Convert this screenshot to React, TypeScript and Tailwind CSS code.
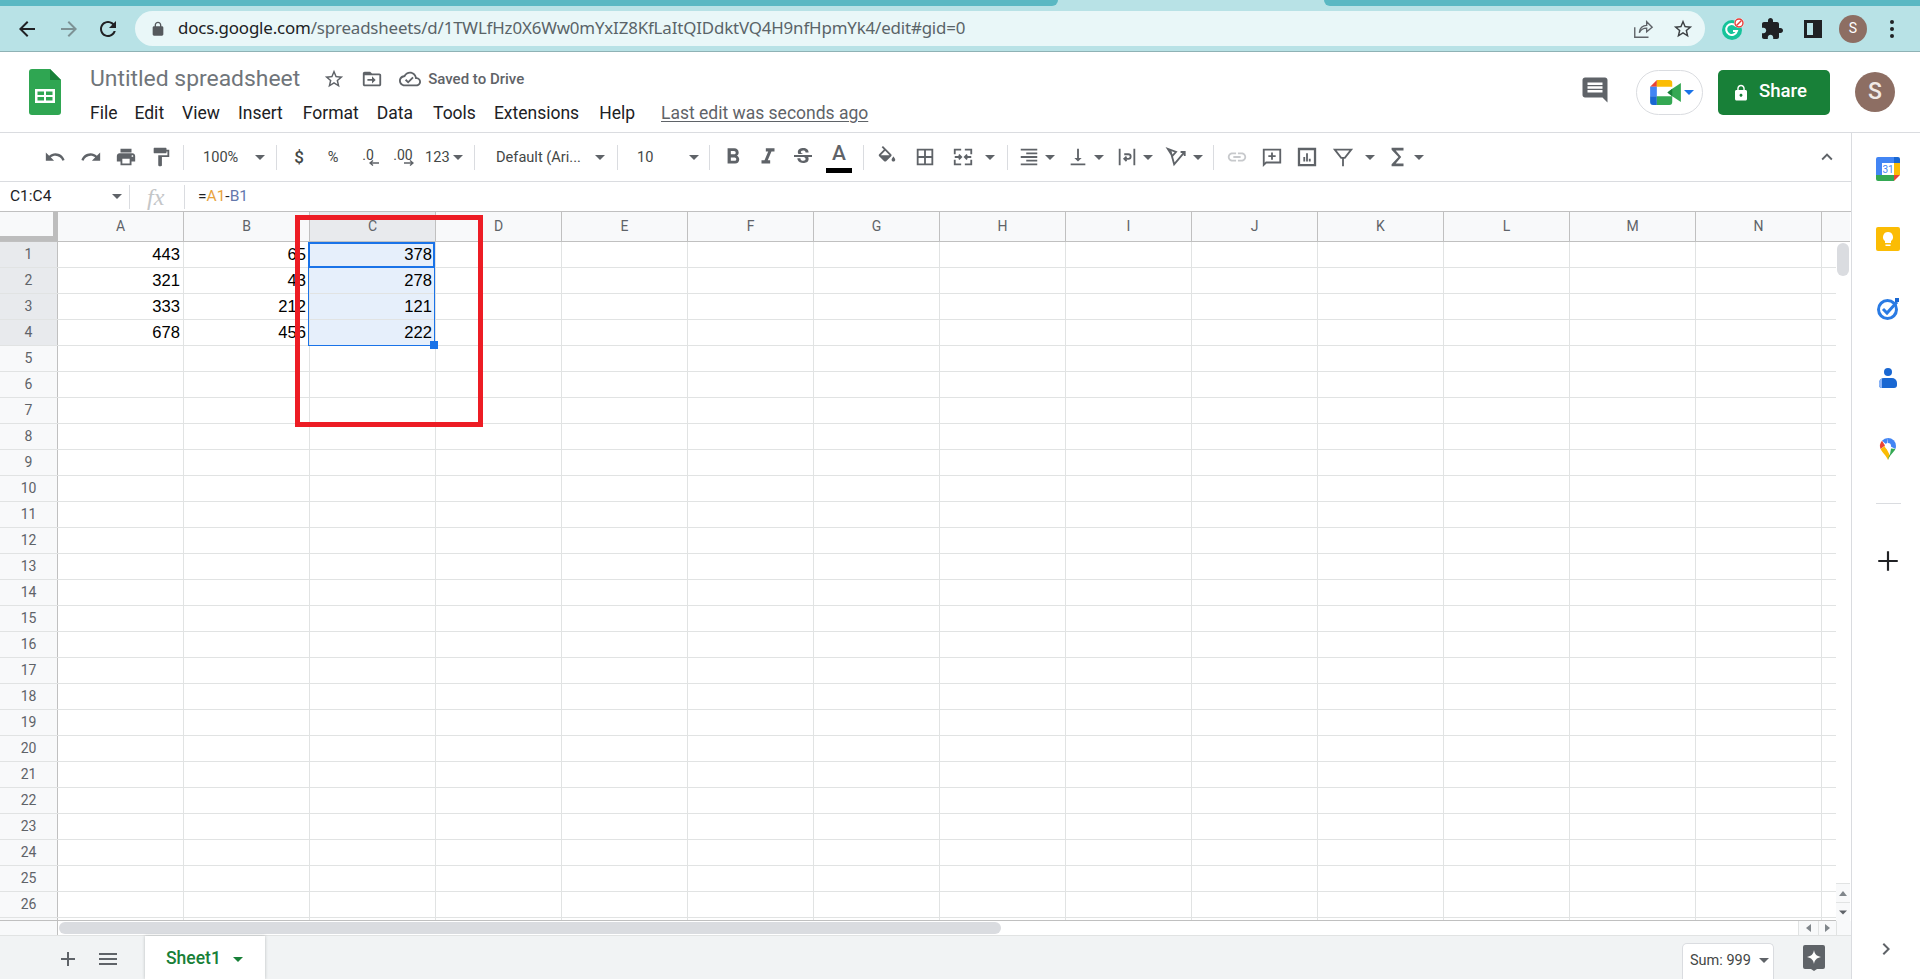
import React from "react";

const P = ({ d, c = "#5f6368", s = 22, className = "" }: { d: string; c?: string; s?: number; className?: string }) => (
  <svg viewBox="0 0 24 24" width={s} height={s} className={"shrink-0 " + className} fill={c}>
    <path d={d} />
  </svg>
);
const Caret = ({ className = "", c = "#5f6368" }: { className?: string; c?: string }) => (
  <svg viewBox="0 0 10 5" width={10} height={5} className={"shrink-0 " + className} fill={c}>
    <path d="M0 0h10L5 5z" />
  </svg>
);
const Sep = ({ className = "" }: { className?: string }) => <div className={"w-px h-[25px] bg-[#dadce0] shrink-0 " + className} />;

const COLS = ["A", "B", "C", "D", "E", "F", "G", "H", "I", "J", "K", "L", "M", "N"];
const DATA: Record<number, string[]> = {
  1: ["443", "65", "378"],
  2: ["321", "43", "278"],
  3: ["333", "212", "121"],
  4: ["678", "456", "222"],
};
const ROWS = Array.from({ length: 26 }, (_, i) => i + 1);

function BrowserBar() {
  return (
    <div className="h-[52px] bg-[#b8e2e6] border-b border-[#8fb2b5] flex flex-col shrink-0">
      <div className="h-[6px] flex shrink-0">
        <div className="w-[1058px] bg-[#5ab8c3] rounded-br-[8px]" />
        <div className="w-[266px]" />
        <div className="flex-1 bg-[#5ab8c3] rounded-bl-[8px]" />
      </div>
      <div className="flex items-center h-[35px] mt-[5px]">
        <P s={24} className="ml-[15px]" c="#202124" d="M20 11H7.83l5.59-5.59L12 4l-8 8 8 8 1.41-1.41L7.83 13H20v-2z" />
        <P s={24} className="ml-[18px]" c="#7d9295" d="M12 4l-1.41 1.41L16.17 11H4v2h12.17l-5.58 5.59L12 20l8-8z" />
        <P s={24} className="ml-[15px]" c="#202124" d="M17.65 6.35C16.2 4.9 14.21 4 12 4c-4.42 0-7.99 3.58-7.99 8s3.57 8 7.99 8c3.73 0 6.84-2.55 7.73-6h-2.08c-.82 2.33-3.04 4-5.65 4-3.31 0-6-2.69-6-6s2.69-6 6-6c1.66 0 3.14.69 4.22 1.78L13 11h7V4l-2.35 2.35z" />
        <div className="ml-[15px] w-[1570px] h-[35px] bg-[#e9f7f8] rounded-full flex items-center relative">
          <P s={16} className="ml-[15px]" c="#55595d" d="M18 8h-1V6c0-2.76-2.24-5-5-5S7 3.24 7 6v2H6c-1.1 0-2 .9-2 2v10c0 1.1.9 2 2 2h12c1.1 0 2-.9 2-2V10c0-1.1-.9-2-2-2zM9 8V6c0-1.66 1.34-3 3-3s3 1.34 3 3v2H9z" />
          <div className="ml-[12px] text-[16.9px] leading-none whitespace-nowrap font-['Noto_Sans',sans-serif] text-[#5a6468] tracking-[-0.16px]">
            <span className="text-[#202124]">docs.google.com</span>/spreadsheets/d/1TWLfHz0X6Ww0mYxIZ8KfLaItQIDdktVQ4H9nfHpmYk4/edit#gid=0
          </div>
          <div className="ml-auto flex items-center pr-[11px]">
            <svg viewBox="0 0 24 24" width={22} height={22} fill="none" stroke="#5f6368" strokeWidth="1.5">
              <path d="M3 10v11h15M8 16c0-5 4-8 8-8V4l6 6-6 5v-4c-3 0-6 1-8 5z" />
            </svg>
            <P s={22} className="ml-[18px]" c="#3c4043" d="M22 9.24l-7.19-.62L12 2 9.19 8.63 2 9.24l5.46 4.73L5.82 21 12 17.27 18.18 21l-1.63-7.03L22 9.24zM12 15.4l-3.76 2.27 1-4.28-3.32-2.88 4.38-.38L12 6.1l1.71 4.04 4.38.38-3.32 2.88 1 4.28L12 15.4z" />
          </div>
        </div>
        <svg viewBox="0 0 24 24" width={24} height={24} className="ml-[16px] shrink-0">
          <circle cx="11" cy="13" r="10" fill="#15c39a" />
          <path d="M15 9a5.5 5.5 0 1 0 1 5h-4" fill="none" stroke="#fff" strokeWidth="2" />
          <circle cx="18" cy="6" r="5" fill="#fff" />
          <circle cx="18" cy="6" r="4" fill="none" stroke="#e53935" strokeWidth="1.4" />
          <path d="M15.5 8.5l5-5" stroke="#e53935" strokeWidth="1.4" />
        </svg>
        <P s={24} className="ml-[15px]" c="#202124" d="M20.5 11H19V7c0-1.1-.9-2-2-2h-4V3.5C13 2.12 11.88 1 10.5 1S8 2.12 8 3.5V5H4c-1.1 0-1.99.9-1.99 2v3.8H3.5c1.49 0 2.7 1.21 2.7 2.7s-1.21 2.7-2.7 2.7H2V20c0 1.1.9 2 2 2h3.8v-1.5c0-1.49 1.21-2.7 2.7-2.7 1.49 0 2.7 1.21 2.7 2.7V22H17c1.1 0 2-.9 2-2v-4h1.5c1.38 0 2.5-1.12 2.5-2.5S21.88 11 20.5 11z" />
        <div className="ml-[20px] w-[18px] h-[18px] border-[3px] border-[#202124] flex justify-end shrink-0">
          <div className="w-[6px] h-full bg-[#202124]" />
        </div>
        <div className="ml-[17px] w-[28px] h-[28px] rounded-full bg-[#8d6e63] text-white text-[14px] flex items-center justify-center font-['Roboto',sans-serif] shrink-0">S</div>
        <svg viewBox="0 0 4 18" width={4} height={18} className="ml-[23px] shrink-0" fill="#202124">
          <circle cx="2" cy="2" r="2" /><circle cx="2" cy="9" r="2" /><circle cx="2" cy="16" r="2" />
        </svg>
      </div>
    </div>
  );
}

function SheetHeader() {
  const menus = [
    ["File", "ml-0"], ["Edit", "ml-[17px]"], ["View", "ml-[18px]"], ["Insert", "ml-[18px]"], ["Format", "ml-[20px]"],
    ["Data", "ml-[18px]"], ["Tools", "ml-[20px]"], ["Extensions", "ml-[18px]"], ["Help", "ml-[20px]"],
  ];
  return (
    <div className="h-[81px] border-b border-[#dadce0] flex shrink-0 bg-white font-['Roboto',sans-serif]">
      <svg viewBox="0 0 32 46" width={32} height={46} className="ml-[29px] mt-[17px] shrink-0">
        <path d="M3 0h18l11 11v32a3 3 0 0 1-3 3H3a3 3 0 0 1-3-3V3a3 3 0 0 1 3-3z" fill="#2fa652" />
        <path d="M21 0l11 11H21z" fill="#188038" />
        <path d="M6 20h20v14H6z" fill="#fff" />
        <path d="M8.5 22.5h6.5v3.5H8.5zM17 22.5h6.5v3.5H17zM8.5 28h6.5v3.5H8.5zM17 28h6.5v3.5H17z" fill="#2fa652" />
      </svg>
      <div className="ml-[29px] flex flex-col">
        <div className="flex items-center h-[30px] mt-[12px]">
          <span className="text-[22.9px] leading-none text-[#70757a] whitespace-nowrap">Untitled spreadsheet</span>
          <P s={22} className="ml-[23px]" c="#5f6368" d="M22 9.24l-7.19-.62L12 2 9.19 8.63 2 9.24l5.46 4.73L5.82 21 12 17.27 18.18 21l-1.63-7.03L22 9.24zM12 15.4l-3.76 2.27 1-4.28-3.32-2.88 4.38-.38L12 6.1l1.71 4.04 4.38.38-3.32 2.88 1 4.28L12 15.4z" />
          <P s={22} className="ml-[16px]" c="#5f6368" d="M20 6h-8l-2-2H4c-1.1 0-2 .9-2 2v12c0 1.1.9 2 2 2h16c1.1 0 2-.9 2-2V8c0-1.1-.9-2-2-2zm0 12H4V8h16v10zm-8-1l4-4-4-4v3H7v2h5v3z" />
          <P s={22} className="ml-[16px]" c="#5f6368" d="M19.35 10.04C18.67 6.59 15.64 4 12 4 9.11 4 6.6 5.64 5.35 8.04 2.34 8.36 0 10.91 0 14c0 3.31 2.69 6 6 6h13c2.76 0 5-2.24 5-5 0-2.64-2.05-4.78-4.65-4.96zM19 18H6c-2.21 0-4-1.79-4-4 0-2.05 1.53-3.76 3.56-3.97l1.07-.11.5-.95C8.08 7.14 9.94 6 12 6c2.62 0 4.88 1.86 5.39 4.43l.3 1.5 1.53.11c1.56.1 2.78 1.41 2.78 2.96 0 1.65-1.35 3-3 3zm-9-3.82l-2.09-2.09L6.5 13.5 10 17l6.01-6.01-1.41-1.41z" />
          <span className="ml-[7px] text-[15px] font-medium text-[#5f6368] whitespace-nowrap">Saved to Drive</span>
        </div>
        <div className="flex items-center h-[28px] mt-[6px] text-[17.5px] text-[#202124] leading-none whitespace-nowrap">
          {menus.map(([m, c]) => (
            <span key={m} className={c}>{m}</span>
          ))}
          <span className="ml-[26px] text-[#5f6368] underline underline-offset-2">Last edit was seconds ago</span>
        </div>
      </div>
      <div className="ml-auto flex items-start">
        <P s={30} className="mt-[23px]" c="#5f6368" d="M21.99 4c0-1.1-.89-2-1.99-2H4c-1.1 0-2 .9-2 2v12c0 1.1.9 2 2 2h14l4 4-.01-18zM18 14H6v-2h12v2zm0-3H6V9h12v2zm0-3H6V6h12v2z" />
        <div className="ml-[26px] mt-[18px] w-[67px] h-[45px] rounded-full border border-[#dadce0] flex items-center pl-[13px]">
          <svg viewBox="0 0 32 26" width={31} height={25} className="shrink-0">
            <path d="M0 7l7-7v7z" fill="#ea4335" />
            <path d="M7 0h13a3 3 0 0 1 3 3v4H7z" fill="#fbbc04" />
            <path d="M0 7h7v10H0z" fill="#4285f4" />
            <path d="M0 17h7v9H3a3 3 0 0 1-3-3z" fill="#1967d2" />
            <path d="M7 17h16v6a3 3 0 0 1-3 3H7z" fill="#34a853" />
            <path d="M23 9l9-6v20l-9-6-5-4z" fill="#34a853" />
            <path d="M18 13l5-4v8z" fill="#188038" />
          </svg>
          <Caret className="ml-[3px]" c="#1a73e8" />
        </div>
        <div className="ml-[15px] mt-[18px] w-[112px] h-[45px] rounded-[5px] bg-[#188038] flex items-center text-white text-[18.6px] font-medium">
          <P s={18} className="ml-[14px]" c="#fff" d="M18 8h-1V6c0-2.76-2.24-5-5-5S7 3.24 7 6v2H6c-1.1 0-2 .9-2 2v10c0 1.1.9 2 2 2h12c1.1 0 2-.9 2-2V10c0-1.1-.9-2-2-2zm-6 9c-1.1 0-2-.9-2-2s.9-2 2-2 2 .9 2 2-.9 2-2 2zm3.1-9H8.9V6c0-1.71 1.39-3.1 3.1-3.1 1.71 0 3.1 1.39 3.1 3.1v2z" />
          <span className="ml-[9px] pb-[2px]">Share</span>
        </div>
        <div className="ml-[25px] mt-[20px] mr-[25px] w-[40px] h-[40px] rounded-full bg-[#8d6e63] text-[#f1e9e6] text-[23px] font-medium flex items-center justify-center">S</div>
      </div>
    </div>
  );
}

function Toolbar() {
  const txt = "text-[14.6px] text-[#444746] leading-none whitespace-nowrap shrink-0";
  return (
    <div className="h-[49px] border-b border-[#dadce0] flex items-center pl-[44px] pr-[13px] shrink-0 font-['Roboto',sans-serif]">
      <P d="M12.5 8c-2.65 0-5.05.99-6.9 2.6L2 7v9h9l-3.62-3.62c1.39-1.16 3.16-1.88 5.12-1.88 3.54 0 6.55 2.31 7.6 5.5l2.37-.78C21.08 11.03 17.15 8 12.5 8z" />
      <P className="ml-[14px]" d="M18.4 10.6C16.55 8.99 14.15 8 11.5 8c-4.65 0-8.58 3.03-9.96 7.22L3.9 16c1.05-3.19 4.05-5.5 7.6-5.5 1.95 0 3.73.72 5.12 1.88L13 16h9V7l-3.6 3.6z" />
      <P className="ml-[13px]" d="M19 8H5c-1.66 0-3 1.34-3 3v6h4v4h12v-4h4v-6c0-1.66-1.34-3-3-3zm-3 11H8v-5h8v5zm3-7c-.55 0-1-.45-1-1s.45-1 1-1 1 .45 1 1-.45 1-1 1zm-1-9H6v4h12V3z" />
      <P className="ml-[13px]" d="M18 4V3c0-.55-.45-1-1-1H5c-.55 0-1 .45-1 1v4c0 .55.45 1 1 1h12c.55 0 1-.45 1-1V6h1v4H9v11c0 .55.45 1 1 1h2c.55 0 1-.45 1-1v-9h8V4h-3z" />
      <Sep className="ml-[11px]" />
      <span className={txt + " ml-[19px] w-[52px]"}>100%</span>
      <Caret />
      <Sep className="ml-[11px]" />
      <span className={txt + " ml-[12px] w-[20px] text-center text-[17px] font-medium"}>$</span>
      <span className={txt + " ml-[14px] w-[20px] text-center"}>%</span>
      <div className="ml-[11px] w-[28px] flex flex-col items-center shrink-0">
        <span className={txt + " text-[14px] -mb-[2px]"}>.0</span>
        <svg viewBox="0 0 10 6" width={10} height={6} className="ml-[12px]" fill="none" stroke="#5f6368" strokeWidth="1.4"><path d="M10 3H1M4 0.5L1 3l3 2.5" /></svg>
      </div>
      <div className="ml-[7px] w-[28px] flex flex-col items-center shrink-0">
        <span className={txt + " text-[14px] -mb-[2px]"}>.00</span>
        <svg viewBox="0 0 10 6" width={10} height={6} className="ml-[12px]" fill="none" stroke="#5f6368" strokeWidth="1.4"><path d="M0 3h9M6 0.5L9 3 6 5.5" /></svg>
      </div>
      <span className={txt + " ml-[8px] w-[26px]"}>123</span>
      <Caret className="ml-[2px]" />
      <Sep className="ml-[11px]" />
      <span className={txt + " ml-[21px] w-[88px]"}>Default (Ari...</span>
      <Caret className="ml-[11px]" />
      <Sep className="ml-[12px]" />
      <span className={txt + " ml-[19px] w-[20px]"}>10</span>
      <Caret className="ml-[32px]" />
      <Sep className="ml-[10px]" />
      <P s={26} className="ml-[10px]" d="M15.6 10.79c.97-.67 1.65-1.77 1.65-2.79 0-2.26-1.75-4-4-4H7v14h7.04c2.09 0 3.71-1.7 3.71-3.79 0-1.52-.86-2.82-2.15-3.42zM10 6.5h3c.83 0 1.5.67 1.5 1.5s-.67 1.5-1.5 1.5h-3v-3zm3.5 9H10v-3h3.5c.83 0 1.5.67 1.5 1.5s-.67 1.5-1.5 1.5z" />
      <P s={26} className="ml-[9px]" d="M10 4v3h2.21l-3.42 8H6v3h8v-3h-2.21l3.42-8H18V4z" />
      <P s={24} className="ml-[10px]" d="M6.85 7.08C6.85 4.37 9.45 3 12.24 3c1.64 0 3 .49 3.9 1.28.77.65 1.46 1.73 1.46 3.24h-3.01c0-.31-.05-.59-.15-.85-.29-.86-1.2-1.28-2.25-1.28-1.86 0-2.34 1.02-2.34 1.7 0 .48.25.88.74 1.21.38.25.77.48 1.41.7H7.39c-.21-.34-.54-.89-.54-1.92zM21 12v-2H3v2h9.62c1.15.45 1.96.75 1.96 1.97 0 1-.81 1.67-2.28 1.67-1.54 0-2.93-.54-2.93-2.51H6.4c0 .55.08 1.13.24 1.58.81 2.29 3.29 3.3 5.67 3.3 2.27 0 5.3-.89 5.3-4.05 0-.3-.01-1.16-.48-1.94H21V12z" />
      <div className="ml-[11px] w-[26px] h-[32px] relative flex flex-col items-center shrink-0">
        <span className="text-[21px] leading-[25px] text-[#5f6368] font-medium">A</span>
        <div className="absolute left-0 bottom-0 w-[26px] h-[5px] bg-black" />
      </div>
      <Sep className="ml-[11px]" />
      <P className="ml-[12px]" d="M16.56 8.94L7.62 0 6.21 1.41l2.38 2.38-5.15 5.15c-.59.59-.59 1.54 0 2.12l5.5 5.5c.29.29.68.44 1.06.44s.77-.15 1.06-.44l5.5-5.5c.59-.58.59-1.53 0-2.12zM5.21 10L10 5.21 14.79 10H5.21zM19 11.5s-2 2.17-2 3.5c0 1.1.9 2 2 2s2-.9 2-2c0-1.33-2-3.5-2-3.5z" />
      <P className="ml-[16px]" d="M3 3v18h18V3H3zm8 16H5v-6h6v6zm0-8H5V5h6v6zm8 8h-6v-6h6v6zm0-8h-6V5h6v6z" />
      <svg viewBox="0 0 24 24" width={22} height={22} className="ml-[16px] shrink-0" fill="none" stroke="#5f6368" strokeWidth="2">
        <path d="M3 9V4h7M14 4h7v5M3 15v5h7M14 20h7v-5" />
        <path d="M3 12h7M7.5 9.5L10 12l-2.5 2.5M21 12h-7M16.5 9.5L14 12l2.5 2.5" />
      </svg>
      <Caret className="ml-[11px]" />
      <Sep className="ml-[12px]" />
      <P className="ml-[10px]" d="M3 21h18v-2H3v2zm6-4h12v-2H9v2zm-6-4h18v-2H3v2zm6-4h12V7H9v2zM3 3v2h18V3H3z" />
      <Caret className="ml-[5px]" />
      <P className="ml-[12px]" d="M16 13h-3V3h-2v10H8l4 4 4-4zM4 19v2h16v-2H4z" />
      <Caret className="ml-[5px]" />
      <svg viewBox="0 0 24 24" width={22} height={22} className="ml-[12px] shrink-0" fill="none" stroke="#5f6368" strokeWidth="2">
        <path d="M4 3v18M20 3v18M9 9h4.5a2.5 2.5 0 0 1 0 5H9M11.5 11.5L9 14l2.5 2.5" />
      </svg>
      <Caret className="ml-[5px]" />
      <svg viewBox="0 0 24 24" width={22} height={22} className="ml-[12px] shrink-0" fill="none" stroke="#5f6368" strokeWidth="2">
        <path d="M3 3l9 3.5L8 11zM5.5 3.5L10 20l11-13M17 6.5h4.5V11" />
      </svg>
      <Caret className="ml-[6px]" />
      <Sep className="ml-[10px]" />
      <P className="ml-[12px]" c="#c7c9cc" d="M3.9 12c0-1.71 1.39-3.1 3.1-3.1h4V7H7c-2.76 0-5 2.24-5 5s2.24 5 5 5h4v-1.9H7c-1.71 0-3.1-1.39-3.1-3.1zM8 13h8v-2H8v2zm9-6h-4v1.9h4c1.71 0 3.1 1.39 3.1 3.1s-1.39 3.1-3.1 3.1h-4V17h4c2.76 0 5-2.24 5-5s-2.24-5-5-5z" />
      <P className="ml-[13px]" d="M22 3H2v20l4-4h16V3zm-2 14H5.2L4 18.2V5h16v12zM11 7h2v3h3v2h-3v3h-2v-3H8v-2h3V7z" />
      <P className="ml-[13px]" d="M2 2h20v20H2V2zm2.5 2.5v15h15v-15h-15zM8 12h2v5H8v-5zm3-4h2v9h-2V8zm3 6h2v3h-2v-3z" />
      <svg viewBox="0 0 24 24" width={22} height={22} className="ml-[14px] shrink-0" fill="none" stroke="#5f6368" strokeWidth="2">
        <path d="M3 4h18l-7 9H10L3 4zM12 13v9" />
      </svg>
      <Caret className="ml-[11px]" />
      <P className="ml-[12px]" d="M18 2H5v2l7.5 8L5 20v2h13v-3H9.5l6-7-6-7H18z" />
      <Caret className="ml-[5px]" />
      <P className="ml-auto" d="M7.41 15.41L12 10.83l4.59 4.58L18 14l-6-6-6 6z" />
    </div>
  );
}

function FormulaBar() {
  return (
    <div className="h-[30px] border-b border-[#c0c0c0] flex items-center shrink-0">
      <span className="ml-[10px] w-[102px] text-[15.5px] leading-none text-[#202124] font-['Roboto',sans-serif]">C1:C4</span>
      <Caret />
      <div className="ml-[7px] w-px h-[24px] bg-[#dadce0]" />
      <span className="ml-[17px] w-[37px] font-['Liberation_Serif',serif] italic text-[24px] leading-none text-[#c4c6c8]">fx</span>
      <div className="w-px h-[24px] bg-[#dadce0]" />
      <span className="ml-[13px] text-[15.5px] leading-none text-[#202124] font-['Roboto',sans-serif]">
        =<span className="text-[#e8a33d]">A1</span>-<span className="text-[#6478ac]">B1</span>
      </span>
    </div>
  );
}

function Grid() {
  return (
    <div className="flex-1 flex min-h-0">
      <div className="w-[1836px] relative">
        <div className="grid grid-cols-[58px_repeat(14,126px)_14px] h-[30px] border-b border-[#c0c0c0] bg-[#f8f9fa] text-[#5f6368] text-[14px] font-['Roboto',sans-serif]">
          <div className="relative">
            <div className="absolute right-0 top-0 w-[5px] h-full bg-[#bdbdbd]" />
            <div className="absolute left-0 bottom-0 w-full h-[5px] bg-[#bdbdbd]" />
          </div>
          {COLS.map((c) => (
            <div key={c} className={"flex items-center justify-center border-r border-[#c0c0c0] " + (c === "C" ? "bg-[#e8eaed]" : "")}>{c}</div>
          ))}
          <div />
        </div>
        {ROWS.map((r) => (
          <div key={r} className="grid grid-cols-[58px_repeat(14,126px)_14px] h-[26px] border-b border-[#e1e3e3]">
            <div className={"flex items-center justify-center border-r border-[#c0c0c0] text-[14px] text-[#5f6368] font-['Roboto',sans-serif] " + (DATA[r] ? "bg-[#e8eaed]" : "bg-[#f8f9fa]")}>{r}</div>
            {COLS.map((c, i) => {
              const val = DATA[r] && i < 3 ? DATA[r][i] : "";
              return (
                <div key={c} className={"flex items-center justify-end pr-[3px] pt-[2px] border-r border-[#e1e3e3] text-[16.6px] leading-none text-black font-['Liberation_Sans',sans-serif] whitespace-nowrap " + (i === 2 && DATA[r] ? "bg-[#e6effb]" : "")}>
                  {val}
                </div>
              );
            })}
            <div />
          </div>
        ))}
        <div className="grid grid-cols-[58px_repeat(14,126px)_14px] h-[3px] border-b border-[#c0c0c0]">
          <div className="bg-[#f8f9fa] border-r border-[#c0c0c0]" />
          {COLS.map((c) => (
            <div key={c} className="border-r border-[#e1e3e3]" />
          ))}
          <div />
        </div>
        {/* selection range */}
        <div className="absolute left-[308px] top-[30px] w-[127px] h-[104px] border border-[#1a73e8] pointer-events-none" />
        <div className="absolute left-[308px] top-[30px] w-[127px] h-[26px] border-2 border-[#1a73e8] pointer-events-none" />
        <div className="absolute left-[430px] top-[129px] w-[8px] h-[8px] bg-[#1a73e8]" />
        {/* red annotation */}
        <div className="absolute left-[295px] top-[3px] w-[188px] h-[212px] border-[5px] border-[#ed1c24] pointer-events-none" />
      </div>
      <div className="w-[14px] flex flex-col">
        <div className="h-[30px] border-b border-[#c0c0c0] bg-[#f8f9fa] shrink-0" />
        <div className="flex-1 px-px pt-px">
          <div className="h-[33px] rounded-full bg-[#dadce0]" />
        </div>
        <div className="h-[19px] border-t border-[#e1e3e3] flex items-center justify-center shrink-0 bg-[#f8f9fa]">
          <svg viewBox="0 0 8 5" width={8} height={5} fill="#80868b"><path d="M0 5h8L4 0z" /></svg>
        </div>
        <div className="h-[19px] border-t border-[#e1e3e3] flex items-center justify-center shrink-0 bg-[#f8f9fa]">
          <Caret className="w-[8px]" />
        </div>
      </div>
    </div>
  );
}

function HScroll() {
  return (
    <div className="h-[14px] flex shrink-0 bg-white">
      <div className="w-[58px] h-full bg-[#f8f9fa] border-r border-[#c0c0c0]" />
      <div className="w-[942px] h-[12px] mt-px ml-px rounded-full bg-[#dadce0]" />
      <div className="flex-1" />
      <div className="w-[20px] flex items-center justify-center border-l border-[#e1e3e3] bg-[#f8f9fa]">
        <svg viewBox="0 0 5 8" width={5} height={8} fill="#80868b"><path d="M5 0v8L0 4z" /></svg>
      </div>
      <div className="w-[18px] flex items-center justify-center border-l border-[#e1e3e3] bg-[#f8f9fa]">
        <svg viewBox="0 0 5 8" width={5} height={8} fill="#80868b"><path d="M0 0v8l5-4z" /></svg>
      </div>
      <div className="w-[15px] border-l border-[#e1e3e3] bg-[#f8f9fa]" />
    </div>
  );
}

function TabBar() {
  return (
    <div className="h-[44px] bg-[#f1f3f4] flex items-center shrink-0 border-t border-[#e1e3e3] font-['Roboto',sans-serif]">
      <P s={24} className="ml-[56px] mt-[2px]" d="M19 13h-6v6h-2v-6H5v-2h6V5h2v6h6v2z" />
      <P s={24} className="ml-[16px] mt-[2px]" d="M3 18h18v-2H3v2zm0-5h18v-2H3v2zm0-7v2h18V6H3z" />
      <div className="ml-[25px] w-[120px] h-full bg-white flex items-center pt-[3px] shadow-[0_0_3px_rgba(60,64,67,0.3)]">
        <span className="ml-[21px] text-[17.5px] font-medium text-[#188038] leading-none">Sheet1</span>
        <svg viewBox="0 0 10 5" width={10} height={5} className="ml-[12px]" fill="#188038"><path d="M0 0h10L5 5z" /></svg>
      </div>
      <div className="ml-auto mt-[7px] w-[92px] h-[37px] bg-white rounded-t-[5px] border border-b-0 border-[#dadce0] flex items-center pb-[2px] text-[14.5px] text-[#444746]">
        <span className="ml-[7px]">Sum: 999</span>
        <Caret className="ml-[8px]" />
      </div>
      <svg viewBox="0 0 24 26" width={24} height={26} className="ml-[28px] mr-[25px] shrink-0">
        <path d="M3 0h18a2 2 0 0 1 2 2v20a2 2 0 0 1-2 2h-6l-3 2-3-2H3a2 2 0 0 1-2-2V2a2 2 0 0 1 2-2z" fill="#5f6368" />
        <path d="M12 5c.7 4 2.4 6 7 7-4.600 1-6.300 3-7 7-.7-4-2.400-6-7-7 4.600-1 6.300-3 7-7z" fill="#fff" />
      </svg>
    </div>
  );
}

function SideBar() {
  return (
    <div className="w-[69px] border-l border-[#dadce0] flex flex-col items-center bg-white shrink-0 pl-[4px]">
      <svg viewBox="0 0 24 24" width={24} height={24} className="mt-[24px] shrink-0">
        <path d="M2 0h16v6H6v12H0V2a2 2 0 0 1 2-2z" fill="#4285f4" />
        <path d="M18 0h4a2 2 0 0 1 2 2v4h-6z" fill="#1967d2" />
        <path d="M18 6h6v12h-6z" fill="#fbbc04" />
        <path d="M0 18h18v6H2a2 2 0 0 1-2-2z" fill="#34a853" />
        <path d="M18 18h6l-6 6z" fill="#ea4335" />
        <rect x="6" y="6" width="12" height="12" fill="#fff" />
        <text x="12" y="16" textAnchor="middle" fontSize="10" fontFamily="Roboto, sans-serif" fill="#4285f4">31</text>
      </svg>
      <svg viewBox="0 0 24 24" width={24} height={24} className="mt-[46px] shrink-0">
        <rect width="24" height="24" rx="2" fill="#fbbc04" />
        <path d="M12 5a5 5 0 0 0-3 9v2h6v-2a5 5 0 0 0-3-9zM9.500 17.500h5V19h-5z" fill="#fff" />
      </svg>
      <svg viewBox="0 0 24 24" width={24} height={24} className="mt-[46px] shrink-0">
        <circle cx="11.500" cy="12.500" r="9" fill="none" stroke="#2a7be4" strokeWidth="3" />
        <path d="M7 12l4 4 10-11" fill="none" stroke="#2a7be4" strokeWidth="3" />
        <path d="M19 1h4v4h-4z" fill="#1967d2" />
      </svg>
      <svg viewBox="0 0 24 24" width={24} height={24} className="mt-[46px] shrink-0">
        <circle cx="12" cy="5" r="4" fill="#1967d2" />
        <path d="M8 11h8a5 5 0 0 1 5 5v2a3 3 0 0 1-3 3H6a3 3 0 0 1-3-3v-2a5 5 0 0 1 5-5z" fill="#1967d2" />
        <path d="M6 21a3 3 0 0 1-3-3v-2a5 5 0 0 1 3-4.600z" fill="#8ab4f8" />
      </svg>
      <svg viewBox="0 0 24 24" width={24} height={24} className="mt-[46px] shrink-0">
        <path d="M12 1a8 8 0 0 0-6 2.700l5 4.300z" fill="#4285f4" />
        <path d="M12 1a8 8 0 0 1 8 8c0 1-.2 2-.6 3L12 8z" fill="#4285f4" />
        <path d="M6 3.700A8 8 0 0 0 4.600 12L9 8.500z" fill="#ea4335" />
        <path d="M4.600 12c1.500 3.500 5.400 6 7.400 11 .3-1.500 1-3 2-4.600L9 9z" fill="#fbbc04" />
        <path d="M19.400 12c-1.400 3-5.500 6-7.400 11 0-2 1-4 2-5.500l1-6z" fill="#34a853" />
        <circle cx="12" cy="9" r="3" fill="#fff" />
      </svg>
      <div className="mt-[42px] w-[25px] h-px bg-[#dadce0] shrink-0" />
      <P s={26} className="mt-[44px]" c="#202124" d="M11 3h2v8h8v2h-8v8h-2v-8H3v-2h8z" />
      <P s={24} className="mt-auto mb-[18px] -ml-[4px]" c="#5f6368" d="M8.59 16.590L13.170 12 8.590 7.410 10 6l6 6-6 6z" />
    </div>
  );
}

export default function App() {
  return (
    <div className="w-[1920px] h-[979px] flex flex-col overflow-hidden bg-white">
      <BrowserBar />
      <SheetHeader />
      <div className="flex-1 flex min-h-0">
        <div className="flex-1 flex flex-col min-w-0">
          <Toolbar />
          <FormulaBar />
          <Grid />
          <HScroll />
          <TabBar />
        </div>
        <SideBar />
      </div>
    </div>
  );
}
